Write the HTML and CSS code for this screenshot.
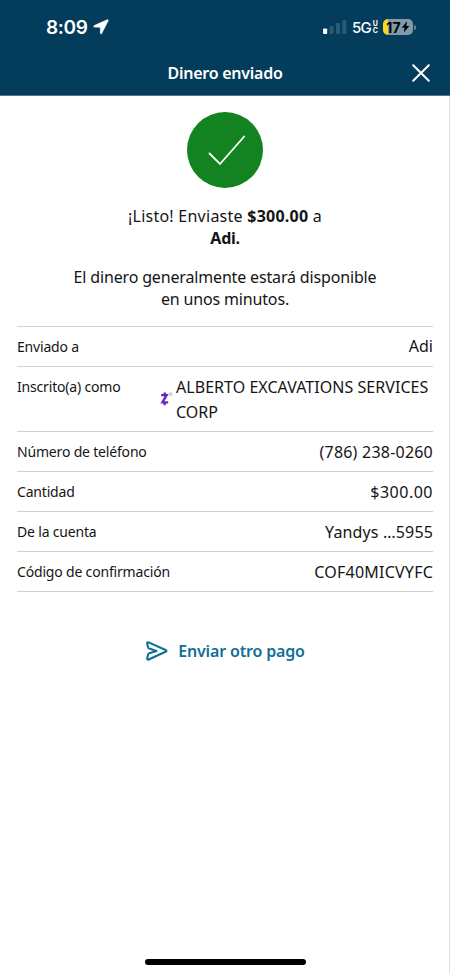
FILE: index.html
```html
<!DOCTYPE html>
<html lang="es">
<head>
<meta charset="utf-8">
<meta name="viewport" content="width=device-width, initial-scale=1">
<title>Dinero enviado</title>
<link rel="stylesheet" href="styles.css">
</head>
<body>
<div class="screen">
  <header class="header">
    <div class="status">
      <div class="status-left">
        <span class="time">8:09</span>
        <svg class="location" width="16" height="16" viewBox="0 0 16 16"><path d="M14.200.8 1.200 6.600c-.8.4-.6 1.500.2 1.500l5.900.1.1 6c0 .9 1 1 1.300.2L15.200 1.800c.3-.7-.3-1.300-1-1z" fill="#fff" stroke="#fff" stroke-width=".6"/></svg>
      </div>
      <div class="status-right">
        <svg class="signal" width="24" height="16" viewBox="0 0 24 16"><rect x="0" y="9.500" width="4.200" height="5.500" rx="1" fill="#fff"/><g fill="#2b5a75"><rect x="6.500" y="7" width="4" height="8" rx="1"/><rect x="13" y="4" width="4" height="11" rx="1"/><rect x="19.300" y="1" width="4" height="14" rx="1"/></g></svg>
        <span class="network">5G</span>
        <span class="uc"><span>U</span><span>C</span></span>
        <div class="battery"><span>17</span><svg width="9" height="12" viewBox="0 0 9 12"><path d="M6 .3.7 6.700h3L2.800 11.500 8.300 5h-3z"/></svg></div>
        <i class="battery-tip"></i>
      </div>
    </div>
    <div class="titlebar">
      <h1 class="title">Dinero enviado</h1>
      <svg class="close" width="18" height="18" viewBox="0 0 18 18"><path d="M1.200 1.200 16.800 16.800M16.800 1.200 1.200 16.800" stroke="#fff" stroke-width="2" stroke-linecap="round"/></svg>
    </div>
  </header>
  <main class="content">
    <svg class="success" width="76" height="76" viewBox="0 0 76 76"><circle cx="38" cy="38" r="38" fill="#138321"/><path d="M22.500 41.500 33 52 57.200 24.500" fill="none" stroke="#fff" stroke-width="1.800" stroke-linecap="round"/></svg>
    <p class="message"><span class="sent">¡Listo! Enviaste <b>$300.00</b> a</span><br><b class="name">Adi.</b></p>
    <p class="message note">El dinero generalmente estará disponible<br>en unos minutos.</p>
    <dl class="details">
      <div class="row"><dt>Enviado a</dt><dd>Adi</dd></div>
      <div class="row row-tall"><dt class="registered">Inscrito(a) como</dt><dd class="company"><svg class="zelle" width="14" height="16" viewBox="0 0 14 16"><path d="M1.200 4.200H6.600L2.400 11.300H8.200M4.700 1.600V4.200M4.700 11.300V14.200" fill="none" stroke="#6425b8" stroke-width="2.300"/><circle cx="10.600" cy="3.200" r="1.600" fill="none" stroke="#c2a8df" stroke-width=".8"/><path d="M10.200 4V2.500h.7v.8h-.5l.7.700" fill="none" stroke="#c2a8df" stroke-width=".4"/></svg><span>ALBERTO EXCAVATIONS SERVICES<br>CORP</span></dd></div>
      <div class="row"><dt>Número de teléfono</dt><dd class="phone">(786) 238-0260</dd></div>
      <div class="row"><dt>Cantidad</dt><dd class="amount">$300.00</dd></div>
      <div class="row"><dt>De la cuenta</dt><dd class="account">Yandys …5955</dd></div>
      <div class="row"><dt>Código de confirmación</dt><dd class="code">COF40MICVYFC</dd></div>
    </dl>
    <a class="again"><svg width="22" height="20" viewBox="0 0 22 20"><path d="M2.600 1.400 19.600 9C20.700 9.600 20.700 10.200 19.600 10.800L2.600 18.500C1.700 18.900 1 18.400 1.200 17.500L2 13.700C2.200 12.900 2.500 12.500 3.300 12.200L10.500 9.900 3.300 7.600C2.500 7.300 2.200 7 2 6.200L1.200 2.400C1 1.500 1.700 1 2.600 1.400z" fill="none" stroke="#126f96" stroke-width="2.100" stroke-linejoin="round"/></svg><span>Enviar otro pago</span></a>
  </main>
  <div class="home"></div>
</div>
</body>
</html>
```
FILE: styles.css
```css
* { box-sizing: border-box; }
body { margin: 0; background: #fff; color: #151515; font-family: "Noto Sans", sans-serif; }
h1, p, dl, dd { margin: 0; }
svg { display: block; flex: none; }
.screen { display: flex; flex-direction: column; width: 450px; height: 973px; background: linear-gradient(#dedede, #dedede) right / 1px 100% no-repeat; }
.header { height: 96px; background: #033d5b; border-bottom: 1px solid #527388; color: #fff; }
.status { display: flex; justify-content: space-between; height: 54px; padding: 0 34px 0 46px; font-family: Inter, sans-serif; }
.status-left, .status-right { display: flex; align-items: center; }
.time { font-size: 19px; font-weight: 600; letter-spacing: -.3px; }
.location { margin-left: 5px; }
.signal { margin-right: 5px; }
.network { font-size: 15px; font-weight: 500; letter-spacing: -.8px; }
.uc { display: flex; flex-direction: column; margin: 0 5px 0 2px; font-size: 7px; line-height: 7px; font-weight: 700; }
.battery { display: flex; align-items: center; justify-content: center; width: 30px; height: 16px; border-radius: 5px; background: linear-gradient(90deg, #f8d72d 5px, #8199a9 5px); color: #000; font-size: 14px; font-weight: 700; letter-spacing: .1px; }
.battery-tip { width: 2px; height: 5px; margin-left: 1px; border-radius: 0 2px 2px 0; background: #63869a; }
.titlebar { display: grid; grid-template-columns: 1fr auto 1fr; align-items: center; height: 38px; padding: 0 20.500px; }
.title { grid-column: 2; font-size: 16px; line-height: 22px; font-weight: 600; letter-spacing: -.25px; }
.close { justify-self: end; }
.content { display: flex; flex: 1; flex-direction: column; align-items: center; padding: 16px 17px 0; }
.message { margin-top: 17px; font-size: 16px; line-height: 22px; text-align: center; }
.sent { letter-spacing: .25px; }
.name { letter-spacing: -.3px; }
.note { margin-top: 17px; letter-spacing: -.16px; }
.details { width: 416px; margin-top: 16px; border-top: 1px solid #d2d2d2; }
.row { display: flex; justify-content: space-between; align-items: center; height: 39.900px; padding-top: 1px; border-bottom: 1px solid #d2d2d2; }
.row-tall { height: 65.500px; align-items: flex-start; padding-top: 8px; }
dt { font-size: 14px; line-height: 24px; letter-spacing: -.18px; }
dd { font-size: 16px; line-height: 25px; }
.company { display: flex; width: 273px; white-space: nowrap; letter-spacing: .04px; }
.zelle { margin: 16px 2px 0 0; }
.phone, .code { letter-spacing: .22px; }
.amount { letter-spacing: .5px; }
.account { letter-spacing: .15px; }
.again { display: flex; align-items: center; gap: 10px; margin-top: 47px; color: #126f96; font-size: 16px; line-height: 24px; font-weight: 600; letter-spacing: -.16px; }
.again svg { margin-left: 1px; }
.home { width: 161px; height: 6px; margin: 0 auto 8px; border-radius: 3px; background: #000; }
```
